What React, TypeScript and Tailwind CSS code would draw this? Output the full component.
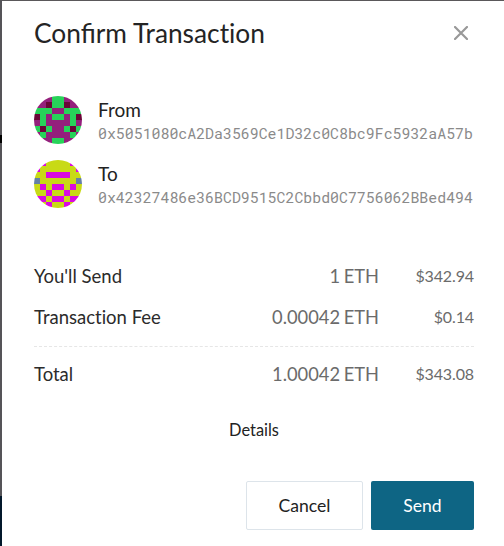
const palettes = {
  from: { g: "#27d359", p: "#94207c", d: "#6a0637" } as Record<string, string>,
  to: { y: "#c8da16", m: "#d90ae0", b: "#6480a8" } as Record<string, string>,
};

// Each row holds the left half of a mirrored 8x8 pattern.
const fromRows = ["gppg", "ppdg", "gggp", "dgpg", "pgpp", "gdgp", "pgpp", "pppg"];
const toRows = ["ymyy", "myyy", "yymm", "byyy", "ymym", "yymy", "mmym", "yymy"];

function Identicon({ rows, colors }: { rows: string[]; colors: Record<string, string> }) {
  return (
    <svg viewBox="0 0 8 8" className="h-12 w-12 shrink-0 rounded-full" shapeRendering="crispEdges">
      {rows.map((row, y) =>
        (row + [...row].reverse().join("")).split("").map((c, x) => (
          <rect key={`${x}-${y}`} x={x} y={y} width={1} height={1} fill={colors[c]} />
        )),
      )}
    </svg>
  );
}

function Party({ label, address, rows, colors }: { label: string; address: string; rows: string[]; colors: Record<string, string> }) {
  return (
    <div className="flex h-16 items-start gap-4">
      <Identicon rows={rows} colors={colors} />
      <div className="pt-[2px]">
        <div className="text-[19px] leading-6 text-[#222]">{label}</div>
        <div className="font-['Roboto_Mono',monospace] text-[14.88px] leading-[22px] whitespace-nowrap text-[#8a8a8a]">
          {address}
        </div>
      </div>
    </div>
  );
}

function Amount({ label, eth, usd }: { label: string; eth: string; usd: string }) {
  return (
    <div className="flex h-[41px] items-center">
      <span className="text-[18.5px] text-[#2b2b2b]">{label}</span>
      <span className="ml-auto text-[18.3px] [word-spacing:-1px] text-[#6b6b6b]">{eth}</span>
      <span className="w-[95px] pb-[2px] text-right text-[16px] tracking-[-0.12px] text-[#6b6b6b]">{usd}</span>
    </div>
  );
}

export default function App() {
  return (
    <div className="flex h-[546px] w-[504px] overflow-hidden bg-white font-['Lato',sans-serif] [font-variant-ligatures:none]">
      <div className="flex w-[2px] shrink-0 flex-col bg-[#555458]">
        <div className="mt-[135px] h-2 bg-black" />
        <div className="mt-auto h-[50px] bg-[#03182b]" />
      </div>
      <main className="flex grow flex-col border-t border-[#5a585a] pr-[30px] pl-8">
        <header className="flex h-[95px] justify-between pt-[14px]">
          <h1 className="text-[26.3px] leading-9 text-[#242424]">
            <span className="[font-variant-ligatures:normal]">Confirm</span> Transaction
          </h1>
          <svg viewBox="0 0 14 14" className="mt-[11px] mr-[6px] h-[14px] w-[14px]" stroke="#999" strokeWidth="2.2" strokeLinecap="round">
            <path d="M1 1 13 13M13 1 1 13" />
          </svg>
        </header>
        <section>
          <Party label="From" address="0x5051080cA2Da3569Ce1D32c0C8bc9Fc5932aA57b" rows={fromRows} colors={palettes.from} />
          <Party label="To" address="0x42327486e36BCD9515C2Cbbd0C7756062BBed494" rows={toRows} colors={palettes.to} />
        </section>
        <section className="mt-8">
          <Amount label="You'll Send" eth="1 ETH" usd="$342.94" />
          <Amount label="Transaction Fee" eth="0.00042 ETH" usd="$0.14" />
          <div className="mt-2 mb-[7px] border-t border-dashed border-[#e6e6e6]" />
          <Amount label="Total" eth="1.00042 ETH" usd="$343.08" />
        </section>
        <button className="mt-[23px] self-center text-[16.4px] leading-6 text-[#222]">Details</button>
        <footer className="mt-[39px] flex justify-end gap-2 text-[17.6px]">
          <button className="h-[49px] w-[117px] rounded-xs border border-[#dde4ea] pt-[2px] text-[#222]">Cancel</button>
          <button className="h-[49px] w-[103px] rounded-xs bg-[#0e6584] pt-[2px] text-white">Send</button>
        </footer>
      </main>
    </div>
  );
}
